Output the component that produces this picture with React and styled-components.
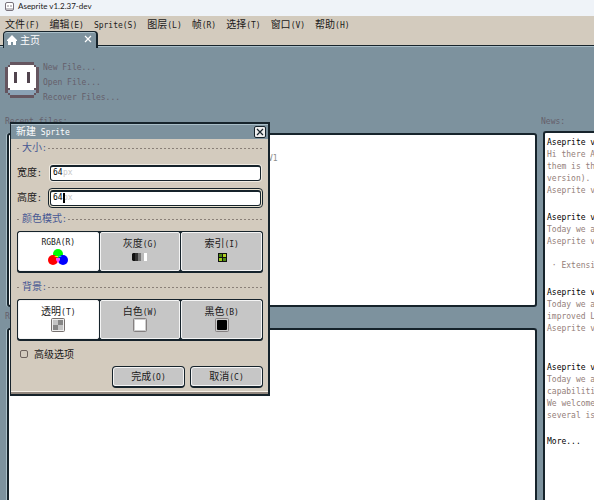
import React from 'react'
import styled, { createGlobalStyle, ThemeProvider } from "styled-components";

const theme = {
    mono: '"DejaVu Sans Mono", "Noto Sans CJK SC", monospace',
    cjk: '"Noto Sans CJK SC", sans-serif',
    ink: '#1b1a1a',
    line: '#16232b',
    desk: '#7d929e',
    deskLight: '#a9bec8',
    deskText: '#655f6b',
    face: '#d3cbbe',
    button: '#c6c6c6',
    blue: '#465693',
    newsText: '#94807a',
};

const GlobalStyle = createGlobalStyle`
  * {
    box-sizing: border-box;
  }
  html, body {
    margin: 0;
    overflow: hidden;
  }
  button, input {
    font: inherit;
    color: inherit;
  }
`;

const Page = styled.div`
  display: flex;
  flex-direction: column;
  height: 100vh;
  overflow: hidden;
  background-color: ${props => props.theme.desk};
  color: ${props => props.theme.ink};
  font: 8px/12px ${props => props.theme.mono};
`;

const Zh = styled.span`
  font-family: ${props => props.theme.cjk};
  font-size: 10px;
`;

const TitleBar = styled.header`
  display: flex;
  align-items: center;
  gap: 4px;
  height: 16px;
  padding: 0 5px 4px;
  background-color: #eff3f8;
  font: 8px/12px Lato, sans-serif;
`;

const MenuBar = styled.nav`
  display: flex;
  align-items: baseline;
  gap: 10px;
  height: 15px;
  padding: 1px 5px 0;
  background-color: ${props => props.theme.face};
`;

const MenuButton = styled.button`
  height: 14px;
  padding: 0;
  border: 0;
  background: none;
  white-space: nowrap;
  line-height: 14px;
`;

const TabStrip = styled.div`
  display: flex;
  height: 17px;
  padding-left: 3px;
  background: linear-gradient(${props => props.theme.face} 14px, ${props => props.theme.line} 14px 15px, ${props => props.theme.deskLight} 15px 16px, ${props => props.theme.desk} 16px);
`;

const Tab = styled.div`
  display: flex;
  align-items: center;
  gap: 3px;
  width: 95px;
  padding: 0 4px 0 3px;
  border: solid ${props => props.theme.line};
  border-width: 1px 2px 0 1px;
  border-radius: 4px 4px 0 0;
  box-shadow: inset 0 1px ${props => props.theme.deskLight};
  background-color: ${props => props.theme.desk};
  color: #fff;
`;

const TabClose = styled.button`
  display: flex;
  margin-left: auto;
  padding: 0 0 3px;
  border: 0;
  background: none;
`;

const Home = styled.main`
  display: grid;
  grid-template-columns: 1fr 53px;
  grid-template-rows: 67px 1fr;
  flex: 1;
  min-height: 0;
`;

const Start = styled.section`
  display: flex;
  gap: 4px;
  padding: 14px 5px 0;
  grid-column: 1 / -1;
`;

const StartLinks = styled.div`
  display: flex;
  flex-direction: column;
  line-height: 15px;
  margin-top: -2px;
`;

const StartLink = styled.a`
  color: ${props => props.theme.deskText};
  text-decoration: none;
`;

const Column = styled.section`
  display: flex;
  flex-direction: column;
  min-width: 0;
  min-height: 0;
  overflow: hidden;
`;

const Caption = styled.h2`
  flex: none;
  height: ${props => props.$height};
  margin: 0;
  padding: ${props => props.$padding};
  color: ${props => props.theme.deskText};
  font: inherit;
  line-height: 12px;
`;

const Pane = styled.div`
  flex: ${props => props.$grow ? '1' : 'none'};
  height: ${props => props.$height || 'auto'};
  margin: 0 4px 0 7px;
  border: 2px solid ${props => props.theme.line};
  border-width: 2px 2px ${props => props.$grow ? '0' : '2px'};
  border-radius: 3px 3px ${props => props.$grow ? '0 0' : '3px 3px'};
  box-shadow: -1px 0 ${props => props.theme.deskLight};
  background-color: #fff;
`;

const RecentFile = styled.div`
  padding: 18px 0 0 259px;
  color: #8d8d8d;
`;

const News = styled.div`
  flex: 1;
  margin-left: 2px;
  padding: 3px 0 0 2px;
  overflow: hidden;
  border: solid ${props => props.theme.line};
  border-width: 2px 0 0 2px;
  border-radius: 3px 0 0 0;
  background-color: #fff;
  color: ${props => props.theme.newsText};
  white-space: nowrap;
`;

const Article = styled.article`
  margin-bottom: 14px;
`;

const ArticleTitle = styled.h3`
  margin: 0;
  color: #000;
  font: inherit;
  line-height: 13px;
`;

const ArticleLine = styled.div`
  height: 12px;
  white-space: pre;
`;

const More = styled.a`
  color: #000;
  text-decoration: none;
`;

// floats over the home tab
const Dialog = styled.form`
  position: absolute;
  top: 122px;
  left: 10px;
  display: flex;
  flex-direction: column;
  width: 260px;
  border: solid ${props => props.theme.line};
  border-width: 2px 2px 2px 1px;
  background-color: ${props => props.theme.face};
  box-shadow: inset 0 -2px #92877e, inset 0 -3px #f5efe6;
`;

const DialogTitle = styled.div`
  display: flex;
  align-items: center;
  justify-content: space-between;
  height: 15px;
  padding: 0 2px 0 5px;
  border-top: 1px solid ${props => props.theme.deskLight};
  background-color: ${props => props.theme.desk};
  color: #fff;
`;

const DialogClose = styled.button`
  display: flex;
  align-items: center;
  justify-content: center;
  width: 12px;
  height: 12px;
  padding: 0;
  border: 1px solid ${props => props.theme.line};
  border-radius: 2px;
  background-color: #eee;
`;

const DialogBody = styled.div`
  display: flex;
  flex-direction: column;
  padding: 0 5px 6px 6px;
`;

const Separator = styled.div`
  display: flex;
  align-items: center;
  gap: 1px;
  height: 14px;
  margin: 2px 0 5px;
  color: ${props => props.theme.blue};

  &::before, &::after {
    content: '';
    width: 4px;
    height: 1px;
    background: repeating-linear-gradient(90deg, #8a8078 0 2px, transparent 2px 4px);
  }
  &::after {
    flex: 1;
  }
`;

const FieldRow = styled.div`
  display: flex;
  align-items: center;
  height: 25px;
`;

const FieldLabel = styled.label`
  width: 31px;
`;

const Entry = styled.div`
  display: flex;
  align-items: center;
  flex: 1;
  height: ${props => props.$focused ? '20px' : '18px'};
  margin: ${props => props.$focused ? '0' : '0 1px'};
  padding: 1px;
  border: ${props => props.$focused ? '1px solid ' + props.theme.line : '0'};
  border-radius: 4px;
  background-color: ${props => props.$focused ? '#e9e2cf' : '#f1ece3'};
`;

const EntryBox = styled.div`
  display: flex;
  align-items: center;
  flex: 1;
  height: 16px;
  padding-left: 2px;
  border: solid ${props => props.theme.line};
  border-width: 2px 1px 1px;
  border-radius: 3px;
  background-color: #fff;
`;

const EntryInput = styled.input`
  width: 10px;
  height: 12px;
  padding: 0;
  border: 0;
  outline: 0;
  background: none;
  color: #000;
`;

const Suffix = styled.span`
  position: relative;
  color: #c9c9c9;
`;

const Caret = styled.i`
  position: absolute;
  top: 1px;
  left: 0;
  width: 2px;
  height: 10px;
  background-color: #000;
`;

const ChoiceGroup = styled.div`
  display: grid;
  grid-template-columns: repeat(3, 1fr);
  height: 42px;
  margin-bottom: 5px;
  border: 1px solid ${props => props.theme.line};
  border-bottom-width: 2px;
  border-radius: 3px;
  background-color: ${props => props.theme.line};
  gap: 1px;
`;

const Choice = styled.label`
  display: flex;
  flex-direction: column;
  align-items: center;
  padding-top: 3px;
  border: 1px solid #f4f4f4;
  border-radius: 2px;
  background-color: ${props => props.theme.button};

  &:has(input:checked) {
    background-color: #fff;
  }
`;

const ChoiceInput = styled.input`
  position: absolute;
  margin: 0;
  opacity: 0;
  pointer-events: none;
`;

const ChoiceText = styled.span`
  height: 13px;
  line-height: 13px;
`;

const ChoiceIcon = styled.svg`
  width: 20px;
  height: 16px;
`;

const CheckRow = styled.label`
  display: flex;
  align-items: center;
  gap: 6px;
  height: 15px;
  margin-bottom: 5px;
  padding-left: 3px;
`;

const CheckBox = styled.input`
  appearance: none;
  width: 8px;
  height: 8px;
  margin: 0;
  border: 1px solid #6d635e;
  border-radius: 2px;
`;

const Actions = styled.div`
  display: flex;
  justify-content: flex-end;
  gap: 5px;
`;

const ActionButton = styled.button`
  width: 73px;
  height: 22px;
  padding: 0;
  border: solid ${props => props.theme.line};
  border-width: 1px 1px 2px;
  border-radius: 4px;
  box-shadow: inset 0 0 0 1px #f4f4f4;
  background-color: ${props => props.theme.button};
`;

const menus = [
    ['文件', '(F)'], ['编辑', '(E)'], ['', 'Sprite(S)'], ['图层', '(L)'],
    ['帧', '(R)'], ['选择', '(T)'], ['窗口', '(V)'], ['帮助', '(H)'],
];

const articles = [
    ['Hi there A', 'them is th', 'version).', 'Aseprite v'],
    ['Today we a', 'Aseprite v', '', ' · Extensi'],
    ['Today we a', 'improved L', 'Aseprite v', ''],
    ['Today we a', 'capabiliti', 'We welcome', 'several is'],
];

const icons = {
    rgb: <>
        <circle cx="10" cy="5" r="5" fill="#0f0" />
        <circle cx="5" cy="11" r="5" fill="#f00" />
        <circle cx="15" cy="11" r="5" fill="#00f" />
        <path d="M8 9h4v2l-2 3-2-3z" fill="#f4f" />
        <path d="M6 7h4v1H8z" fill="#ff0" />
        <path d="M10 7h4l-2 1z" fill="#0ff" />
    </>,
    gray: <>
        <path d="M3 4h2v8H3l-1-1V5z" fill="#111" />
        <path d="M5 4h3v8H5z" fill="#333" />
        <path d="M8 4h3v8H8z" fill="#777" />
        <path d="M11 4h3v8h-3z" fill="#bbb" />
        <path d="M14 4h3v8h-3z" fill="#fff" />
    </>,
    indexed: <>
        <path d="M6 4h9v9H6z" fill="#111" />
        <path d="M7 5h3v3H7z" fill="#4d8a12" />
        <path d="M11 5h3v3h-3z" fill="#b3cf24" />
        <path d="M7 9h3v3H7z" fill="#9dcb16" />
        <path d="M11 9h3v3h-3z" fill="#4d8a12" />
    </>,
    transparent: <>
        <rect x="3.5" y="1.5" width="13" height="13" rx="1" fill="#eee" stroke="#76716f" />
        <path d="M5 3h5v5H5zM10 8h5v5h-5z" fill="#c4c4c4" />
        <path d="M10 3h5v5h-5zM5 8h5v5H5z" fill="#858585" />
    </>,
    white: <>
        <rect x="3.5" y="1.5" width="13" height="13" rx="1" fill="#ccc" stroke="#858080" />
        <path d="M5 3h10v10H5z" fill="#fff" />
    </>,
    black: <>
        <rect x="3.5" y="1.5" width="13" height="13" rx="1" fill="#ccc" stroke="#858080" />
        <rect x="5" y="3" width="10" height="10" rx="1" fill="#000" />
    </>,
};

const colorModes = [
    { zh: '', text: 'RGBA(R)', icon: 'rgb' },
    { zh: '灰度', text: '(G)', icon: 'gray' },
    { zh: '索引', text: '(I)', icon: 'indexed' },
];

const backgrounds = [
    { zh: '透明', text: '(T)', icon: 'transparent' },
    { zh: '白色', text: '(W)', icon: 'white' },
    { zh: '黑色', text: '(B)', icon: 'black' },
];

const Logo = () => (
    <svg width="34" height="36" viewBox="0 0 13 14" preserveAspectRatio="none" shapeRendering="crispEdges">
        <path d="M2 0h9v1h1v1h1v10h-1v1h-1v1H2v-1H1v-1H0V2h1V1h1z" fill="#65555f" />
        <path d="M2 1h9v1h1v8H1V2h1z" fill="#fff" />
        <path d="M1 11h1v-1h9v1h1v1h-1v1H2v-1H1z" fill="#8ba2b5" />
        <path d="M2 10h9v1H2z" fill="#fff" />
        <path d="M3.5 4h1v4h-1zM8.5 4h1v4h-1z" fill="#51444e" />
    </svg>
)

const Cross = ({ color, size }) => (
    <svg width={size} height={size} viewBox="0 0 8 8">
        <path d="M1 1l6 6M7 1L1 7" stroke={color} strokeWidth="1.2" />
    </svg>
)

const Choices = ({ name, items }) => (
    <ChoiceGroup>
        {items.map((item, i) => (
            <Choice key={item.icon}>
                <ChoiceInput type="radio" name={name} defaultChecked={i === 0} />
                <ChoiceText>{item.zh && <Zh>{item.zh}</Zh>}{item.text}</ChoiceText>
                <ChoiceIcon viewBox="0 0 20 16">{icons[item.icon]}</ChoiceIcon>
            </Choice>
        ))}
    </ChoiceGroup>
)

const SizeField = ({ id, label, focused }) => (
    <FieldRow>
        <FieldLabel htmlFor={id}><Zh>{label}</Zh>:</FieldLabel>
        <Entry $focused={focused}>
            <EntryBox>
                <EntryInput id={id} defaultValue="64" />
                <Suffix>px{focused && <Caret />}</Suffix>
            </EntryBox>
        </Entry>
    </FieldRow>
)

const NewSpriteDialog = () => (
    <Dialog onSubmit={e => e.preventDefault()}>
        <DialogTitle>
            <span><Zh>新建</Zh> Sprite</span>
            <DialogClose type="button"><Cross color="#16232b" size={8} /></DialogClose>
        </DialogTitle>
        <DialogBody>
            <Separator><span><Zh>大小</Zh>:</span></Separator>
            <SizeField id="width" label="宽度" />
            <SizeField id="height" label="高度" focused />
            <Separator><span><Zh>颜色模式</Zh>:</span></Separator>
            <Choices name="mode" items={colorModes} />
            <Separator><span><Zh>背景</Zh>:</span></Separator>
            <Choices name="background" items={backgrounds} />
            <CheckRow>
                <CheckBox type="checkbox" />
                <Zh>高级选项</Zh>
            </CheckRow>
            <Actions>
                <ActionButton type="submit"><Zh>完成</Zh>(O)</ActionButton>
                <ActionButton type="button"><Zh>取消</Zh>(C)</ActionButton>
            </Actions>
        </DialogBody>
    </Dialog>
)

const App = () => {
    return (
        <ThemeProvider theme={theme}>
            <GlobalStyle />
            <Page>
                <TitleBar>
                    <svg width="9" height="9" viewBox="0 0 9 9">
                        <rect x="0.5" y="0.5" width="8" height="8" rx="1.5" fill="#fff" stroke="#77717b" />
                        <path d="M3 3v2M6 3v2M1 7h7" stroke="#8b8790" />
                    </svg>
                    Aseprite v1.2.37-dev
                </TitleBar>
                <MenuBar>
                    {menus.map(([zh, text]) => (
                        <MenuButton key={zh + text}>{zh && <Zh>{zh}</Zh>}{text}</MenuButton>
                    ))}
                </MenuBar>
                <TabStrip>
                    <Tab>
                        <svg width="10" height="10" viewBox="0 0 10 10">
                            <path d="M5 0l5 5v1H9v4H6V7H4v3H1V6H0V5z" fill="#fff" />
                        </svg>
                        <Zh>主页</Zh>
                        <TabClose><Cross color="#fff" size={8} /></TabClose>
                    </Tab>
                </TabStrip>
                <Home>
                    <Start>
                        <Logo />
                        <StartLinks>
                            <StartLink href="#new">New File...</StartLink>
                            <StartLink href="#open">Open File...</StartLink>
                            <StartLink href="#recover">Recover Files...</StartLink>
                        </StartLinks>
                    </Start>
                    <Column>
                        <Caption $height="18px" $padding="1px 5px 0">Recent files:</Caption>
                        <Pane $height="174px"><RecentFile>V1</RecentFile></Pane>
                        <Caption $height="21px" $padding="4px 5px 0">Recent folders:</Caption>
                        <Pane $grow />
                    </Column>
                    <Column>
                        <Caption $height="16px" $padding="1px 0 0">News:</Caption>
                        <News>
                            {articles.map((lines, i) => (
                                <Article key={i}>
                                    <ArticleTitle>Aseprite v</ArticleTitle>
                                    {lines.map((line, j) => <ArticleLine key={j}>{line}</ArticleLine>)}
                                </Article>
                            ))}
                            <More href="#more">More...</More>
                        </News>
                    </Column>
                </Home>
                <NewSpriteDialog />
            </Page>
        </ThemeProvider>
    )
}

export default App;
